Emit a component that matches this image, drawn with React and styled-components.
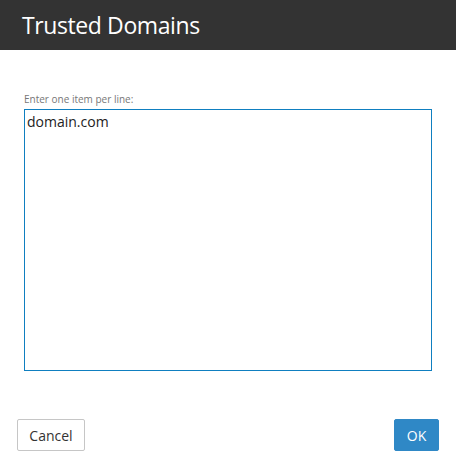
import React, { useEffect, useRef } from "react";
import styled, { createGlobalStyle } from "styled-components";

const Global = createGlobalStyle`
  html, body { margin: 0; padding: 0; background: #fff; }
  body { font-family: "Open Sans", "Noto Sans", sans-serif; }
`;

const Dialog = styled.div`
  width: 456px;
  height: 468px;
  display: flex;
  flex-direction: column;
  background: #fff;
`;

const Header = styled.header`
  height: 50px;
  background: #333333;
  display: flex;
  align-items: center;
  padding-left: 22px;
  box-sizing: border-box;
`;

const Title = styled.h1`
  margin: 0;
  font-size: 23px;
  font-weight: 400;
  color: #fff;
  letter-spacing: -0.4px;
`;

const Body = styled.div`
  padding: 42px 24px 0 24px;
  display: flex;
  flex-direction: column;
`;

const Label = styled.label`
  font-size: 10px;
  color: #777;
  margin-bottom: 3px;
`;

const TextArea = styled.textarea`
  box-sizing: border-box;
  width: 408px;
  height: 262px;
  margin: 0;
  border: 1px solid #0f7fc0;
  outline: none;
  resize: none;
  padding: 2px 2px;
  font-family: inherit;
  font-size: 14px;
  color: #222;
  caret-color: #000;
`;

const Footer = styled.div`
  display: flex;
  justify-content: space-between;
  padding: 48px 17px 0 17px;
`;

const Button = styled.button`
  height: 32px;
  width: ${(p) => (p.$primary ? "45px" : "68px")};
  box-sizing: border-box;
  padding: 0;
  font-family: inherit;
  font-size: 14px;
  border-radius: 2px;
  border: 1px solid ${(p) => (p.$primary ? "#2f88c6" : "#c6c6c6")};
  background: ${(p) => (p.$primary ? "#2f88c6" : "#fff")};
  color: ${(p) => (p.$primary ? "#fff" : "#333")};
  cursor: pointer;
`;

export default function App() {
  const areaRef = useRef(null);

  // Focus the list and put the caret after the last entry
  useEffect(() => {
    const el = areaRef.current;
    if (el) {
      el.focus();
      const end = el.value.length;
      el.setSelectionRange(end, end);
    }
  }, []);

  return (
    <Dialog>
      <Global />
      <Header>
        <Title>Trusted Domains</Title>
      </Header>
      <Body>
        <Label>Enter one item per line:</Label>
        <TextArea ref={areaRef} defaultValue="domain.com" />
      </Body>
      <Footer>
        <Button>Cancel</Button>
        <Button $primary>OK</Button>
      </Footer>
    </Dialog>
  );
}
